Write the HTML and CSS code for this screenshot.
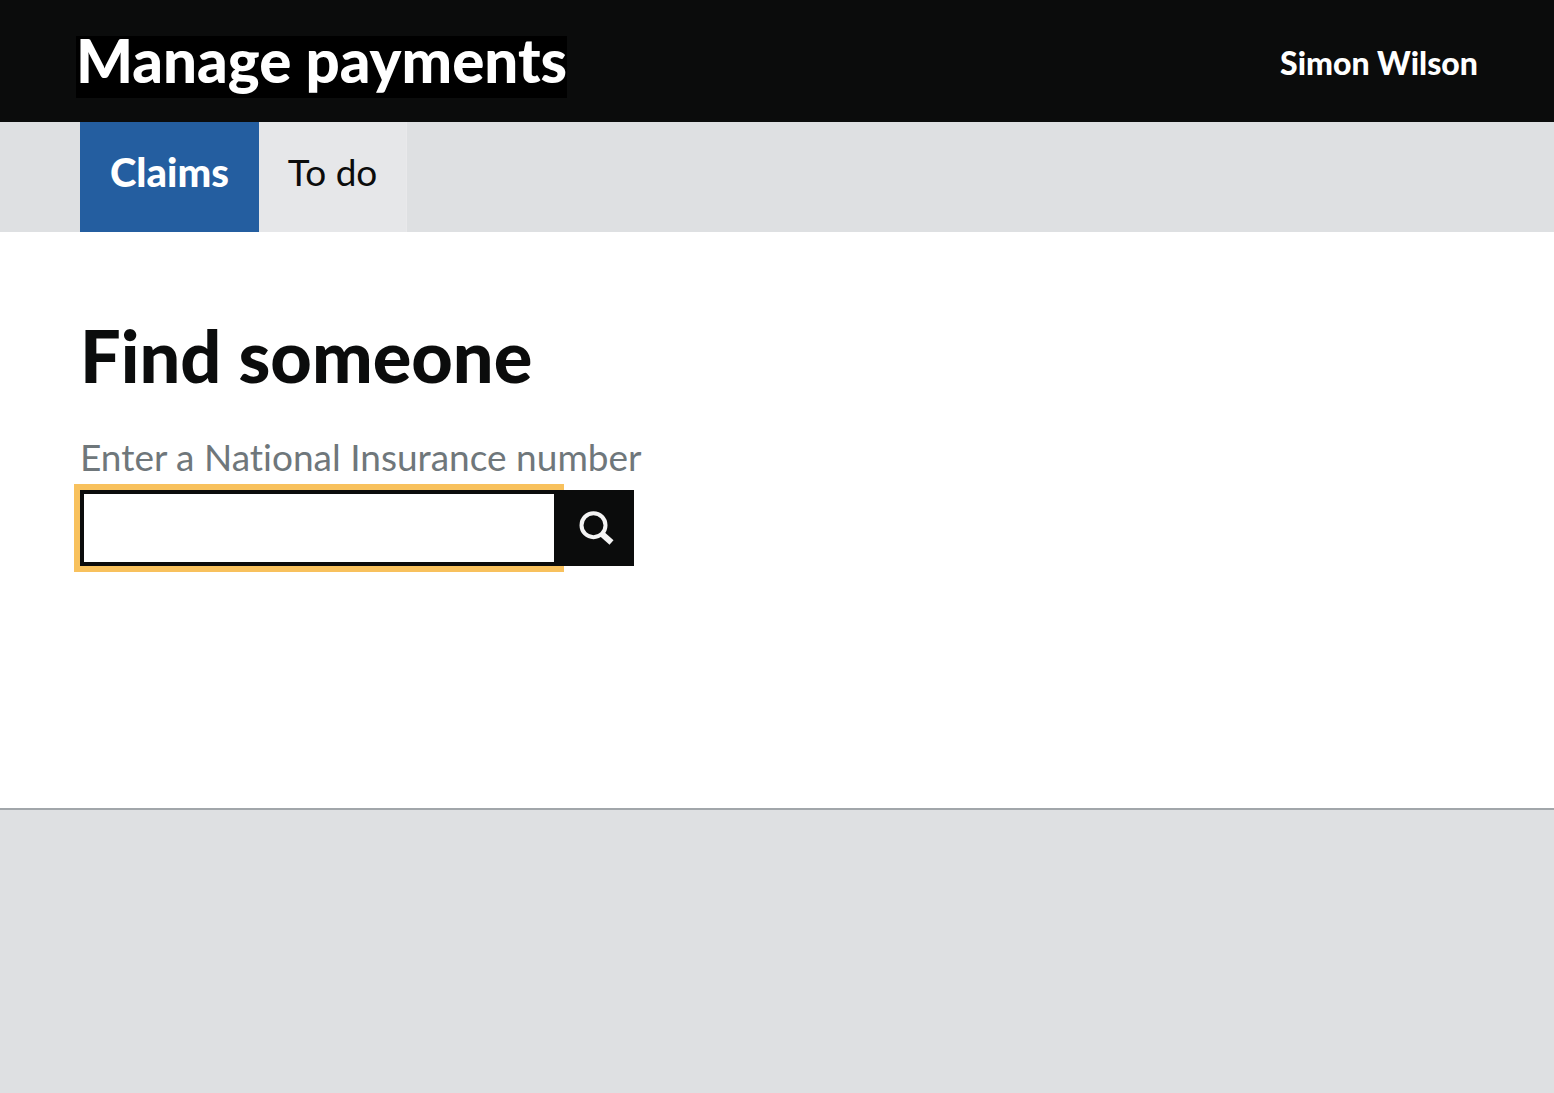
FILE: index.html
```html
<!DOCTYPE html>
<html lang="en">
<head>
<meta charset="utf-8">
<meta name="viewport" content="width=device-width, initial-scale=1">
<title>Manage payments</title>
<link rel="stylesheet" href="styles.css">
</head>
<body>
<header class="header">
  <a class="header-title" href="#">Manage payments</a>
  <a class="header-user" href="#">Simon Wilson</a>
</header>
<nav class="tabs" aria-label="Sections">
  <a class="tab tab-current" href="#" aria-current="page">Claims</a>
  <a class="tab" href="#">To do</a>
</nav>
<main class="main">
  <h1 class="heading">Find someone</h1>
  <form class="search">
    <label class="search-label" for="nino">Enter a National Insurance number</label>
    <div class="search-row">
      <input class="search-input" id="nino" name="nino" type="text" autocomplete="off">
      <button class="search-button" type="submit" aria-label="Search">
        <svg class="search-icon" viewBox="0 0 36 36" aria-hidden="true">
          <circle cx="15.5" cy="15.2" r="12"/>
          <path d="M24 24L33.5 32.5" class="search-handle"/>
        </svg>
      </button>
    </div>
  </form>
</main>
<footer class="footer"></footer>
</body>
</html>
```

FILE: styles.css
```css
* {
  box-sizing: border-box;
}

body {
  display: flex;
  flex-direction: column;
  min-height: 100vh;
  margin: 0;
  background: #fff;
  color: #0b0c0c;
  font-family: Lato, "Noto Sans", sans-serif;
  font-size: 37px;
  font-variant-ligatures: none;
  line-height: 44px;
}

a {
  color: inherit;
  text-decoration: none;
}

.header {
  display: flex;
  align-items: center;
  justify-content: space-between;
  padding: 36px 76px 24px;
  background: #0b0c0c;
  color: #fff;
  font-weight: 900;
}

.header-title {
  padding-bottom: 14px;
  background: #000;
  font-size: 60px;
  line-height: 48px;
}

.header-user {
  padding-bottom: 8px;
  font-size: 32px;
  line-height: 36px;
}

.tabs {
  display: flex;
  padding: 0 80px;
  background: #dee0e2;
}

.tab {
  padding: 28px 29px 38px;
  border-right: 1px solid #e9e9eb;
  background: #e6e7e9;
}

.tab-current {
  padding: 28px 30px 38px;
  border-right: 0;
  background: #245ea0;
  color: #fff;
  font-size: 40px;
  font-weight: 900;
}

.main {
  padding: 85px 80px 242px;
}

.heading {
  margin: 0 0 42px;
  font-size: 72px;
  font-weight: 900;
  line-height: 76px;
}

.search-label {
  display: block;
  margin-bottom: 11px;
  color: #6f777b;
}

.search-row {
  display: flex;
}

.search-input {
  width: 478px;
  height: 76px;
  padding: 0 12px;
  border: 4px solid #0b0c0c;
  border-radius: 0;
  outline: 6px solid #f8c15d;
  background: #fff;
  color: inherit;
  font: inherit;
}

.search-button {
  display: flex;
  align-items: center;
  justify-content: center;
  width: 76px;
  height: 76px;
  padding: 0;
  border: 0;
  background: #0b0c0c;
}

.search-icon {
  width: 36px;
  height: 36px;
  fill: none;
  stroke: #f4f4f4;
  stroke-width: 4;
}

.search-handle {
  stroke-width: 6;
}

.footer {
  flex: 1;
  border-top: 2px solid #a1a6aa;
  background: #dee0e2;
}
```
